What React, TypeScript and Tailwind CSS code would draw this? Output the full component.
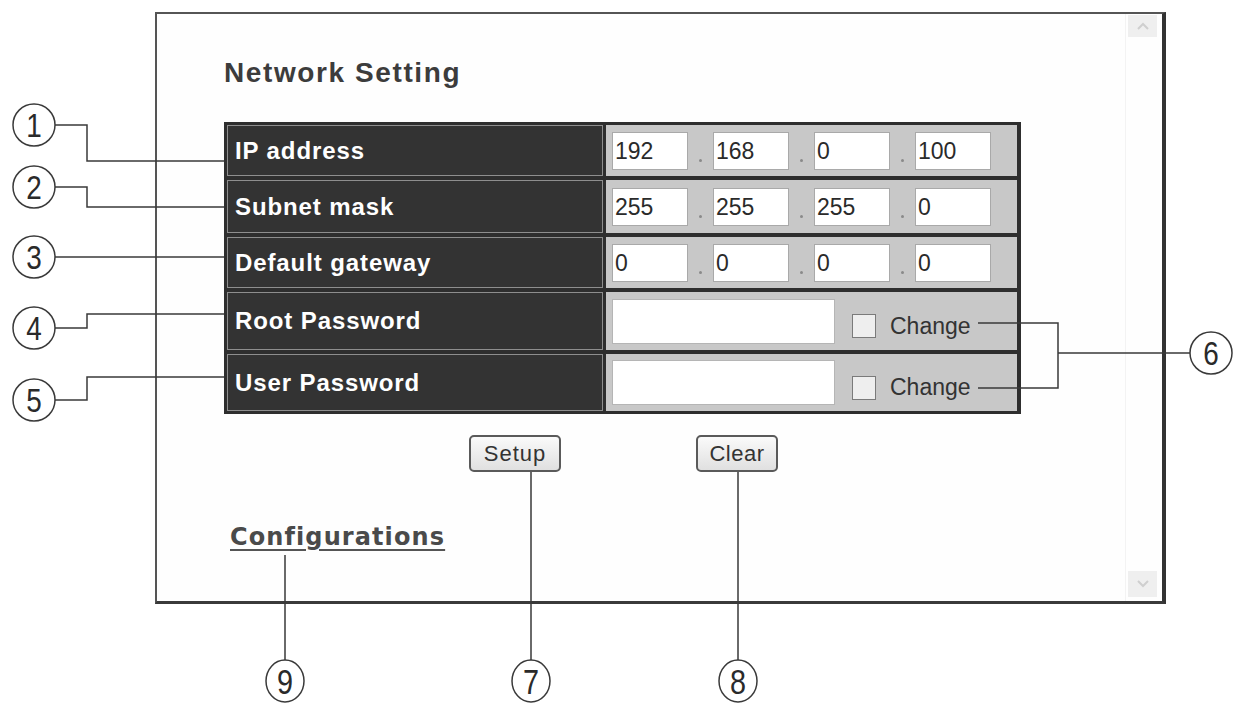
import React from "react";

type Row = { label: string; h: string; ip?: string[] };

const rows: Row[] = [
  { label: "IP address", h: "h-[51px]", ip: ["192", "168", "0", "100"] },
  { label: "Subnet mask", h: "h-[53px]", ip: ["255", "255", "255", "0"] },
  { label: "Default gateway", h: "h-[51px]", ip: ["0", "0", "0", "0"] },
  { label: "Root Password", h: "h-[58px]" },
  { label: "User Password", h: "h-[57px]" },
];

function IpField({ value }: { value: string }) {
  return (
    <input
      readOnly
      value={value}
      className="h-[38px] w-[76px] border border-[#a9a9a9] bg-white pl-[2px] pt-[2px] text-[23px] leading-none text-[#2a2a2a] outline-none"
    />
  );
}

function IpGroup({ parts }: { parts: string[] }) {
  return (
    <div className="flex items-center">
      {parts.map((p, i) => (
        <React.Fragment key={i}>
          {i > 0 && (
            <div className="flex h-[38px] w-[25px] items-end justify-center pb-[8px]">
              <div className="h-[3px] w-[3px] rounded-full bg-[#8a8a8a]" />
            </div>
          )}
          <IpField value={p} />
        </React.Fragment>
      ))}
    </div>
  );
}

function PasswordField() {
  return (
    <div className="flex items-center">
      <input
        readOnly
        type="password"
        value=""
        className="h-[45px] w-[223px] border border-[#b5b5b5] bg-white outline-none"
      />
      <label className="ml-[17px] mt-[10px] flex items-center gap-[14px]">
        <span className="h-[24px] w-[24px] border-[1.5px] border-[#7a7a7a] bg-[#eeeeee]" />
        <span className="text-[23px] leading-none text-[#333]">Change</span>
      </label>
    </div>
  );
}

function Chevron({ up }: { up?: boolean }) {
  return (
    <svg width="14" height="10" viewBox="0 0 14 10">
      <path
        d={up ? "M2 8 L7 3 L12 8" : "M2 2 L7 7 L12 2"}
        fill="none"
        stroke="#cfcfcf"
        strokeWidth="2"
      />
    </svg>
  );
}

function Callouts() {
  const line = { fill: "none", stroke: "#3a3a3a", strokeWidth: 1.5 };
  const side = [
    { n: "1", cx: 34, cy: 125 },
    { n: "2", cx: 34, cy: 187 },
    { n: "3", cx: 34, cy: 257 },
    { n: "4", cx: 34, cy: 328 },
    { n: "5", cx: 34, cy: 400 },
    { n: "6", cx: 1211, cy: 353 },
  ];
  const bottom = [
    { n: "9", cx: 285 },
    { n: "7", cx: 531 },
    { n: "8", cx: 738 },
  ];
  return (
    <svg
      className="pointer-events-none absolute left-0 top-0"
      width="1240"
      height="703"
      viewBox="0 0 1240 703"
    >
      <path d="M55 125 H87 V161 H224" {...line} />
      <path d="M55 187 H87 V207 H224" {...line} />
      <path d="M55 257 H224" {...line} />
      <path d="M55 328 H87 V314 H224" {...line} />
      <path d="M55 400 H87 V377 H224" {...line} />
      <path d="M978 323 H1058 V388 H978 M1058 353 H1190" {...line} />
      <path d="M285 555 V660 M531 472 V660 M738 472 V660" {...line} />
      {side.map((c) => (
        <g key={c.n}>
          <circle cx={c.cx} cy={c.cy} r="21" fill="#fff" stroke="#3a3a3a" strokeWidth="1.5" />
          <text
            transform={`translate(${c.cx} ${c.cy}) scale(0.82 1)`}
            x="0"
            y="12"
            textAnchor="middle"
            fontFamily="'Liberation Sans', Arial, sans-serif"
            fontSize="34"
            fill="#2a2a2a"
          >
            {c.n}
          </text>
        </g>
      ))}
      {bottom.map((c) => (
        <g key={c.n}>
          <ellipse cx={c.cx} cy="681" rx="19" ry="21" fill="#fff" stroke="#3a3a3a" strokeWidth="1.5" />
          <text
            transform={`translate(${c.cx} 681) scale(0.8 1)`}
            x="0"
            y="13"
            textAnchor="middle"
            fontFamily="'Liberation Sans', Arial, sans-serif"
            fontSize="36"
            fill="#2a2a2a"
          >
            {c.n}
          </text>
        </g>
      ))}
    </svg>
  );
}

export default function App() {
  return (
    <div className="relative h-[703px] w-[1240px] overflow-hidden bg-white pl-[155px] pt-[12px] font-['Liberation_Sans',Arial,sans-serif]">
      <div className="flex h-[592px] w-[1011px] border-b-[3px] border-l-2 border-r-4 border-t-2 border-b-[#3a3a3a] border-l-[#555] border-r-[#333] border-t-[#555] bg-[#fefefe]">
        <div className="flex-1 pl-[67px] pt-[45px]">
          <h1 className="text-[28px] font-bold leading-[28px] tracking-[1.6px] text-[#3c3c3c]">
            Network Setting
          </h1>

          <div className="mt-[35px] flex w-[797px] flex-col gap-[4px] bg-[#2e2e2e] pb-[3px] pl-[3px] pr-[4px] pt-[3px]">
            {rows.map((r) => (
              <div key={r.label} className={`grid grid-cols-[376px_411px] gap-[3px] ${r.h}`}>
                <div className="flex items-center border border-[#8e8e8e] bg-[#333] pl-[7px] text-[24px] font-bold leading-none tracking-[0.9px] text-white">
                  {r.label}
                </div>
                <div className="flex items-center bg-[#c8c8c8] pl-[6px]">
                  {r.ip ? <IpGroup parts={r.ip} /> : <PasswordField />}
                </div>
              </div>
            ))}
          </div>

          <div className="mt-[21px] flex pl-[245px]">
            <button className="flex h-[37px] w-[92px] items-center justify-center rounded-[5px] border-2 border-[#5a5a5a] bg-gradient-to-b from-[#fafafa] to-[#e0e0e0] text-[22px] leading-none tracking-[1px] text-[#333]">
              Setup
            </button>
            <button className="ml-[135px] flex h-[37px] w-[82px] items-center justify-center rounded-[5px] border-2 border-[#5a5a5a] bg-gradient-to-b from-[#fafafa] to-[#e0e0e0] text-[22px] leading-none tracking-[0.5px] text-[#333]">
              Clear
            </button>
          </div>

          <a className="ml-[6px] mt-[53px] inline-block font-['DejaVu_Sans',sans-serif] text-[24px] font-bold leading-[24px] tracking-[1.1px] text-[#4a4a4a] underline decoration-[#555] decoration-2 underline-offset-[4px]">
            Configurations
          </a>
        </div>

        <div className="flex w-[37px] flex-col justify-between border-l border-[#f3f3f3] pb-[4px] pl-[2px] pt-[1px]">
          <div className="flex h-[22px] w-[29px] items-center justify-center bg-[#efefef]">
            <Chevron up />
          </div>
          <div className="flex h-[26px] w-[29px] items-center justify-center bg-[#efefef]">
            <Chevron />
          </div>
        </div>
      </div>

      <Callouts />
    </div>
  );
}
